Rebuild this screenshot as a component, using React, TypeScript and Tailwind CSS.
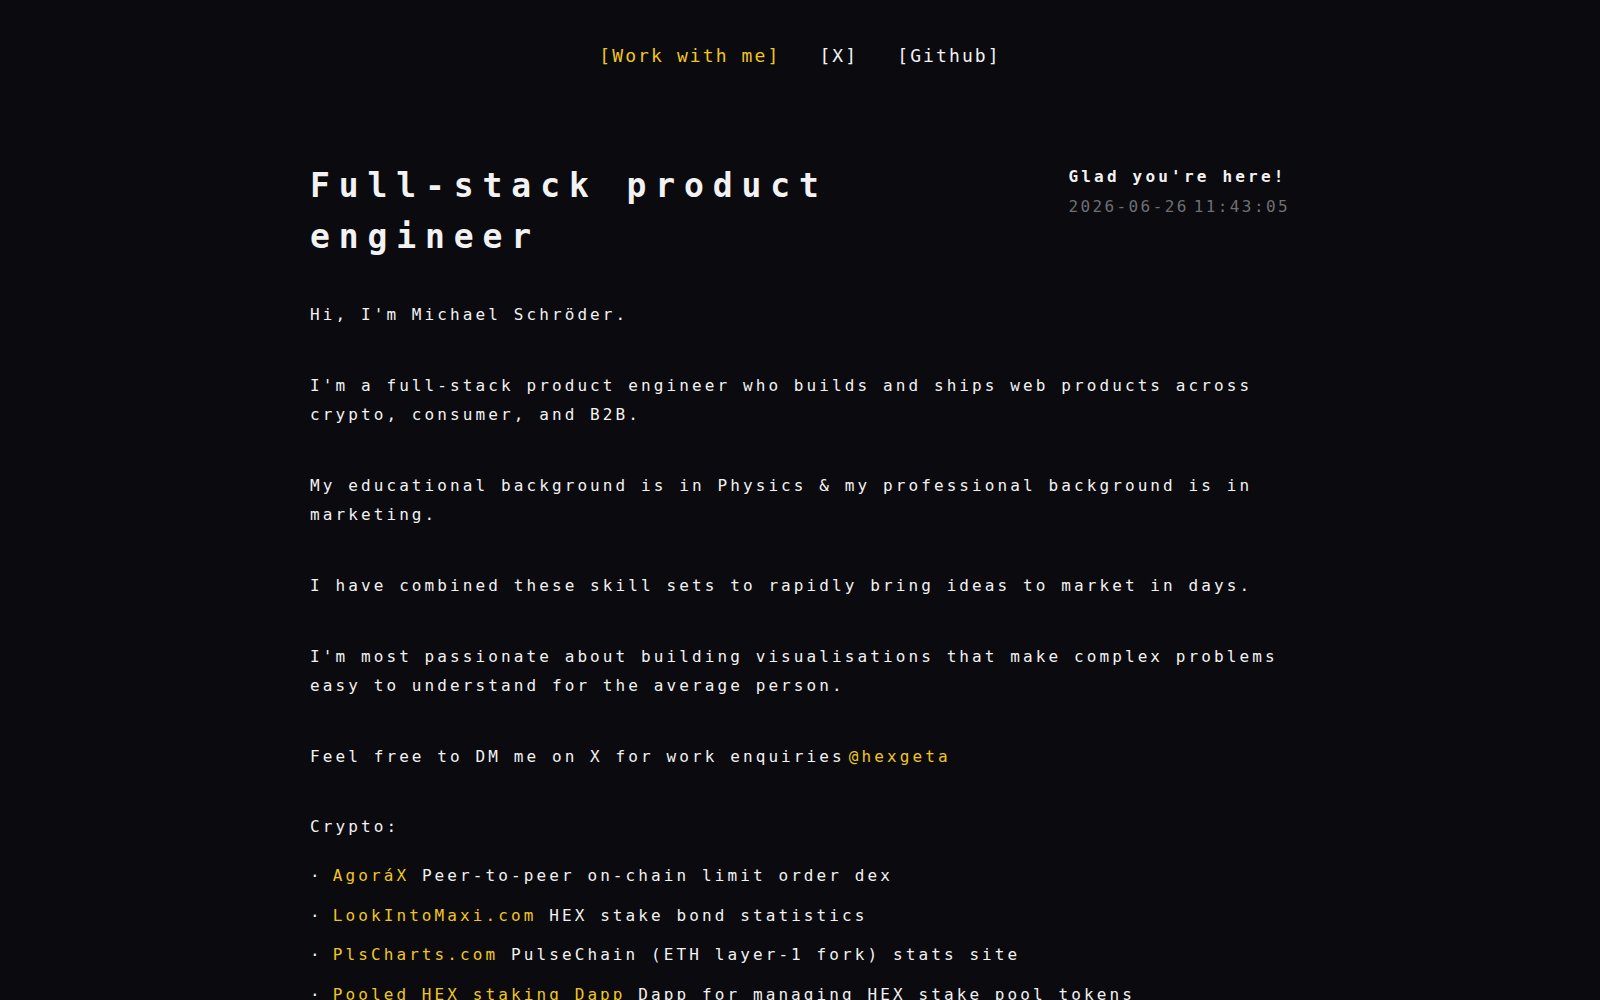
import React from "react";

const Y = "text-[#f0c61e]";

function Item({ name, desc }: { name: string; desc: string }) {
  return (
    <li className="leading-[29.6px]">
      <span>·</span>
      <a className={`${Y} ml-[10px]`} href="#">{name}</a>
      <span> {desc}</span>
    </li>
  );
}

export default function App() {
  return (
    <div
      className="min-h-screen bg-[#0a0a0f] text-[#f2f2f2]"
      style={{ fontFamily: '"DejaVu Sans Mono", "Liberation Mono", monospace' }}
    >
      <nav className="flex justify-center gap-[39px] pt-[42px] text-[18px] leading-[28px] tracking-[2.1px]">
        <a className={Y} href="#">[Work with me]</a>
        <a href="#">[X]</a>
        <a href="#">[Github]</a>
      </nav>

      <main className="mx-auto w-[980px] pt-[86px] text-[16px] tracking-[3.1px]">
        <header className="flex justify-between">
          <h1 className="pt-[4px] text-[33px] font-bold leading-[51px] tracking-[8.9px] w-[600px]">
            Full-stack product engineer
          </h1>
          <div className="pt-[6px] leading-[29.6px]">
            <div className="font-bold tracking-[3.2px]">Glad you're here!</div>
            <div className="flex gap-[5px] text-[16px] tracking-[2.4px] text-[#6f6f72]">
              <span>2026-06-26</span>
              <span>11:43:05</span>
            </div>
          </div>
        </header>

        <div className="pt-[38px] leading-[29.6px]">
          <p className="mb-[41px]">Hi, I'm Michael Schröder.</p>
          <p className="mb-[41px]">
            I'm a full-stack product engineer who builds and ships web products across crypto, consumer, and B2B.
          </p>
          <p className="mb-[41px]">
            My educational background is in Physics &amp; my professional background is in marketing.
          </p>
          <p className="mb-[41px]">
            I have combined these skill sets to rapidly bring ideas to market in days.
          </p>
          <p className="mb-[41px] pr-[10px]">
            I'm most passionate about building visualisations that make complex problems easy to understand for the average person.
          </p>
          <p className="mb-[41px]">
            Feel free to DM me on X for work enquiries
            <a className={`${Y} ml-[4px]`} href="#">@hexgeta</a>
          </p>
          <p className="mb-[19px]">Crypto:</p>
          <ul className="flex flex-col gap-[10px]">
            <Item name="AgoráX" desc="Peer-to-peer on-chain limit order dex" />
            <Item name="LookIntoMaxi.com" desc="HEX stake bond statistics" />
            <Item name="PlsCharts.com" desc="PulseChain (ETH layer-1 fork) stats site" />
            <Item name="Pooled HEX staking Dapp" desc="Dapp for managing HEX stake pool tokens" />
          </ul>
        </div>
      </main>
    </div>
  );
}
